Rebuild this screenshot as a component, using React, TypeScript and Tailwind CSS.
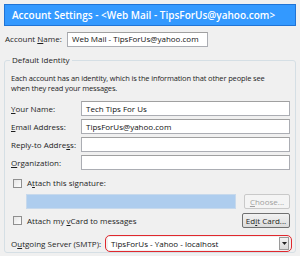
import React from 'react';

const font = { fontFamily: '"Open Sans", "Noto Sans", sans-serif' };

const Field = ({ value, className = '' }: { value?: string; className?: string }) => (
  <div className={`h-[15px] bg-white border border-[#abadb3] border-t-[#a0a0a0] flex items-center px-[4px] text-[8px] text-[#111] whitespace-nowrap ${className}`}>
    {value}
  </div>
);

const Box = () => (
  <div className="w-[9px] h-[9px] border border-[#8f8f8f] bg-gradient-to-br from-[#e6e6e6] to-[#fdfdfd] shrink-0" />
);

const Row = ({ label, value }: { label: React.ReactNode; value?: string }) => (
  <div className="flex items-center">
    <div className="w-[70px] text-[8px] text-[#1e1e1e] whitespace-nowrap">{label}</div>
    <Field value={value} className="flex-1" />
  </div>
);

export default function App() {
  return (
    <div className="w-[300px] h-[256px] bg-[#f0f0f0] overflow-hidden px-[4px] pt-[4px]" style={font}>
      <div className="h-[22px] bg-[#3399ff] border border-[#1f74d6] flex items-center pl-[7px] text-white text-[10px] font-semibold whitespace-nowrap">
        Account Settings - &lt;Web Mail - TipsForUs@yahoo.com&gt;
      </div>

      <div className="flex items-center mt-[5px] h-[16px]">
        <div className="w-[63px] pl-[1px] text-[8px] text-[#1e1e1e] whitespace-nowrap">
          Account <span className="underline">N</span>ame:
        </div>
        <Field value="Web Mail - TipsForUs@yahoo.com" className="w-[141px]" />
      </div>

      <div className="relative mt-[13px] border border-[#d5dfe5] rounded-[3px] h-[193px] pl-[6px] pr-[5px]">
        <div className="absolute -top-[7px] left-[5px] bg-[#f0f0f0] px-[2px] text-[8px] text-[#1e1e1e] leading-[12px] whitespace-nowrap">
          Default Identity
        </div>
        <div className="mt-[12px] text-[7.5px] tracking-[-0.15px] leading-[10px] text-[#1e1e1e] whitespace-nowrap">
          Each account has an identity, which is the information that other people see
          <br />
          when they read your messages.
        </div>

        <div className="mt-[8px] flex flex-col gap-[3px]">
          <Row label={<><span className="underline">Y</span>our Name:</>} value="Tech Tips For Us" />
          <Row label={<><span className="underline">E</span>mail Address:</>} value="TipsForUs@yahoo.com" />
          <Row label={<>Reply-to Addre<span className="underline">s</span>s:</>} />
          <Row label={<><span className="underline">O</span>rganization:</>} />
        </div>

        <div className="mt-[7px] flex items-center gap-[5px] pl-[2px]">
          <Box />
          <span className="text-[8px] text-[#1e1e1e] whitespace-nowrap">
            A<span className="underline">t</span>tach this signature:
          </span>
        </div>

        <div className="mt-[5px] flex items-center">
          <div className="ml-[15px] w-[210px] h-[15px] bg-[#aecdee] border border-[#c7d9ec]" />
          <div className="ml-auto w-[46px] h-[15px] border border-[#c9c9c9] bg-[#f4f4f4] rounded-[2px] flex items-center justify-center text-[8px] text-[#a0a0a0] whitespace-nowrap">
            <span className="underline">C</span>hoose...
          </div>
        </div>

        <div className="mt-[4px] flex items-center">
          <div className="flex items-center gap-[5px] pl-[2px]">
            <Box />
            <span className="text-[8px] text-[#1e1e1e] whitespace-nowrap">
              Attach my <span className="underline">v</span>Card to messages
            </span>
          </div>
          <div className="ml-auto w-[48px] h-[15px] border border-[#707070] bg-gradient-to-b from-[#f2f2f2] to-[#dcdcdc] rounded-[2px] flex items-center justify-center text-[8px] text-[#1e1e1e] whitespace-nowrap">
            Ed<span className="underline">i</span>t Card...
          </div>
        </div>

        <div className="mt-[7px] flex items-center">
          <span className="text-[8px] text-[#1e1e1e] w-[94px] whitespace-nowrap">
            O<span className="underline">u</span>tgoing Server (SMTP):
          </span>
          <div className="flex-1 -mr-[2px] h-[17px] border-[1.5px] border-[#e0282e] rounded-[5px] flex items-center px-[2px]">
            <div className="flex-1 h-[13px] bg-white flex items-center pl-[3px] text-[8px] text-[#111] whitespace-nowrap">
              TipsForUs - Yahoo - localhost
            </div>
            <div className="w-[10px] h-[13px] border border-[#9a9a9a] bg-gradient-to-b from-[#f4f4f4] to-[#dadada] flex items-center justify-center">
              <svg width="5" height="3" viewBox="0 0 5 3"><path d="M0 0h5L2.5 3z" fill="#222" /></svg>
            </div>
          </div>
        </div>
      </div>
    </div>
  );
}
